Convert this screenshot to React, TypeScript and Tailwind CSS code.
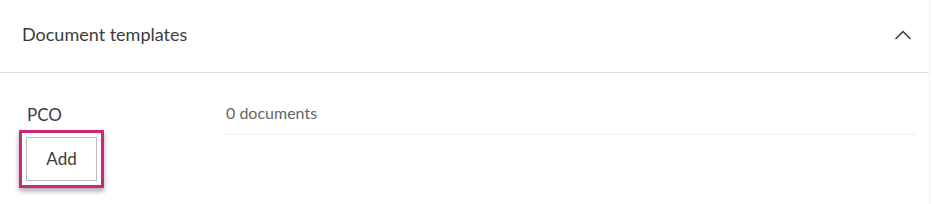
import { ChevronUp } from "lucide-react";

export default function App() {
  return (
    <div className="h-[204px] w-[933px] bg-white font-['Lato','Noto_Sans',sans-serif] text-[#3c3c3c]">
      <div className="w-[930px] border-r border-[#f0f0f0] h-full">
        <div className="flex h-[73px] items-center justify-between border-b border-[#dcdcdc] pl-[22px] pr-[12px]">
          <h2 className="-mt-[5px] text-[18px] leading-none">Document templates</h2>
          <ChevronUp className="-mt-[2px] h-[28px] w-[28px] text-[#3c3c3c]" strokeWidth={1.4} />
        </div>
        <div className="flex pt-[32px] pr-[14px]">
          <div className="w-[226px] shrink-0 pl-[19px]">
            <div className="pl-[8px] text-[17px] leading-[20px]">PCO</div>
            <div className="mt-[5px] inline-block border-[3px] border-[#c8277a] p-[4px] shadow-[0_3px_5px_rgba(0,0,0,0.35)]">
              <button className="h-[44px] w-[71px] border border-[#bdbdbd] bg-white text-[17px]">
                Add
              </button>
            </div>
          </div>
          <div className="flex-1">
            <div className="-mt-[2px] border-b border-[#eeeeee] pb-[11px] text-[16px] leading-[20px] text-[#666]">
              0 documents
            </div>
          </div>
        </div>
      </div>
    </div>
  );
}
